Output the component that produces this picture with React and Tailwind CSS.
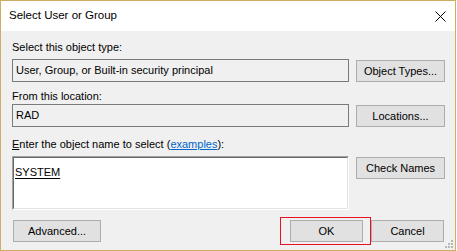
import React from "react";

const font = { fontFamily: '"Liberation Sans", Arial, sans-serif' };

const Button = ({ children, className = "" }) => (
  <div
    className={
      "flex items-center justify-center h-[22px] border border-[#adadad] bg-[#e1e1e1] text-[11px] text-black " +
      className
    }
  >
    {children}
  </div>
);

const ReadOnlyBox = ({ value }) => (
  <div className="flex items-center w-[337px] h-[23px] border border-[#7a7a7a] bg-[#f0f0f0] pl-[3px] text-[11px] text-black">
    {value}
  </div>
);

const App = () => {
  return (
    <div className="w-[457px] h-[251px] bg-white" style={font}>
      <div className="relative flex flex-col w-[456px] h-[251px] border border-[#cfae62] bg-[#f0f0f0]">
        {/* title bar */}
        <div className="flex items-center justify-between h-[30px] bg-white pl-[8px] pr-[9px]">
          <span className="text-[11.5px] text-black">Select User or Group</span>
          <svg width="11" height="11" viewBox="0 0 11 11" className="mt-[1px]">
            <path d="M0.5 0.5 L10.5 10.5 M10.5 0.5 L0.5 10.5" stroke="#000" strokeWidth="1" />
          </svg>
        </div>

        <div className="flex flex-col pl-[11px] pr-[10px]">
          <div className="mt-[10px] h-[13px] leading-[13px] text-[11px] text-black">Select this object type:</div>
          <div className="flex items-start gap-[7px] mt-[5px]">
            <ReadOnlyBox value="User, Group, or Built-in security principal" />
            <Button className="w-[89px] mt-[1px]">Object Types...</Button>
          </div>

          <div className="mt-[8px] h-[13px] leading-[13px] text-[11px] text-black">From this location:</div>
          <div className="flex items-start gap-[7px] mt-[1px]">
            <ReadOnlyBox value="RAD" />
            <Button className="w-[89px] mt-[1px]">Locations...</Button>
          </div>

          <div className="mt-[11px] h-[13px] leading-[13px] text-[11px] text-black">
            <span className="underline">E</span>nter the object name to select (
            <span className="text-[#0066cc] underline">examples</span>):
          </div>
          <div className="flex items-start gap-[7px] mt-[5px]">
            <div className="w-[337px] h-[54px] border-t border-l border-t-[#a0a0a0] border-l-[#a0a0a0] border-b border-r border-b-white border-r-white">
              <div className="w-full h-full bg-white border-t border-l border-t-[#696969] border-l-[#696969] border-b border-r border-b-[#e3e3e3] border-r-[#e3e3e3] pl-[1px] pt-[1px]">
                <span className="text-[11px] leading-[13px] text-black underline underline-offset-[2px]">SYSTEM</span>
              </div>
            </div>
            <Button className="w-[89px] mt-[1px] h-[20px]">Check Names</Button>
          </div>

          <div className="flex items-center mt-[10px]">
            <Button className="w-[88px] ml-[1px]">Advanced...</Button>
            <div className="flex-1" />
            <Button className="w-[73px]">OK</Button>
            <Button className="w-[73px] ml-[8px] mr-[1px]">Cancel</Button>
          </div>
        </div>

        {/* focus highlight around OK */}
        <div className="absolute left-[279px] top-[216px] w-[91px] h-[28px] border border-[#e81123]" />

        {/* size grip */}
        <svg width="8" height="8" viewBox="0 0 8 8" className="absolute right-[2px] bottom-[2px]">
          <rect x="6" y="0" width="2" height="2" fill="#b8b8b8" />
          <rect x="3" y="3" width="2" height="2" fill="#b8b8b8" />
          <rect x="6" y="3" width="2" height="2" fill="#b8b8b8" />
          <rect x="0" y="6" width="2" height="2" fill="#b8b8b8" />
          <rect x="3" y="6" width="2" height="2" fill="#b8b8b8" />
          <rect x="6" y="6" width="2" height="2" fill="#b8b8b8" />
        </svg>
      </div>
    </div>
  );
};

export default App;
